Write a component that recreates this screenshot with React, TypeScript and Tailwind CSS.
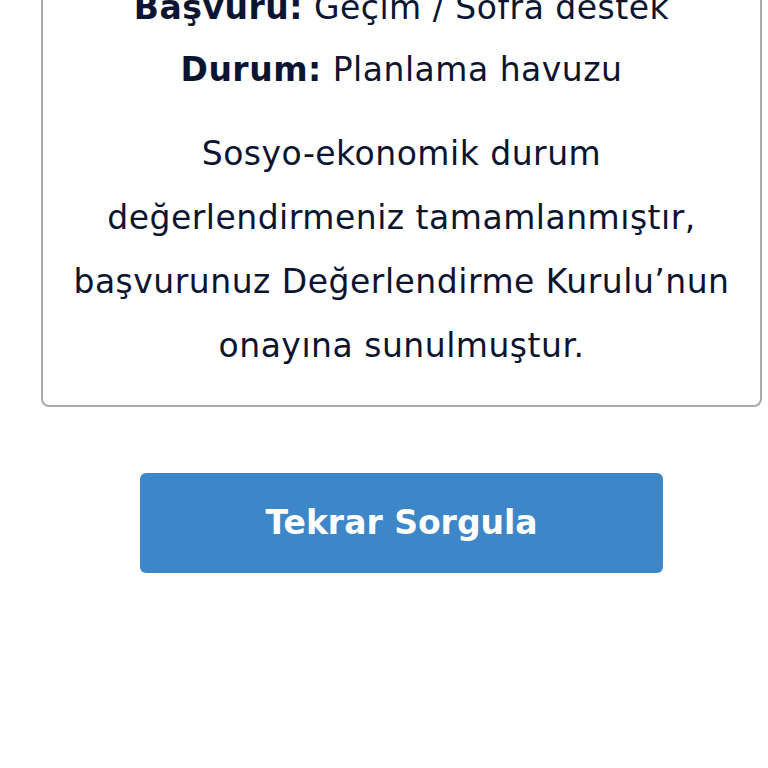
export default function App() {
  return (
    <div className="w-[768px] h-[768px] overflow-hidden bg-white" style={{ fontFamily: '"DejaVu Sans", sans-serif' }}>
      <div className="ml-[41px] w-[721px] mt-[-35px] rounded-lg border-2 border-[#aaaaaa] text-center text-[#0b1430] text-[33px] tracking-[0.5px] leading-[64px] pt-[10px] pb-[27px]">
        <p className="leading-[62px]"><span className="font-bold">Başvuru:</span> Geçim / Sofra destek</p>
        <p className="leading-[62px]"><span className="font-bold">Durum:</span> Planlama havuzu</p>
        <p className="mt-[21px]">
          Sosyo-ekonomik durum<br />
          değerlendirmeniz tamamlanmıştır,<br />
          başvurunuz Değerlendirme Kurulu’nun<br />
          onayına sunulmuştur.
        </p>
      </div>
      <div className="flex justify-center pl-[35px] mt-[66px]">
        <button className="w-[523px] h-[100px] rounded-md bg-[#3d87c8] text-white font-bold text-[33px]">Tekrar Sorgula</button>
      </div>
    </div>
  );
}
